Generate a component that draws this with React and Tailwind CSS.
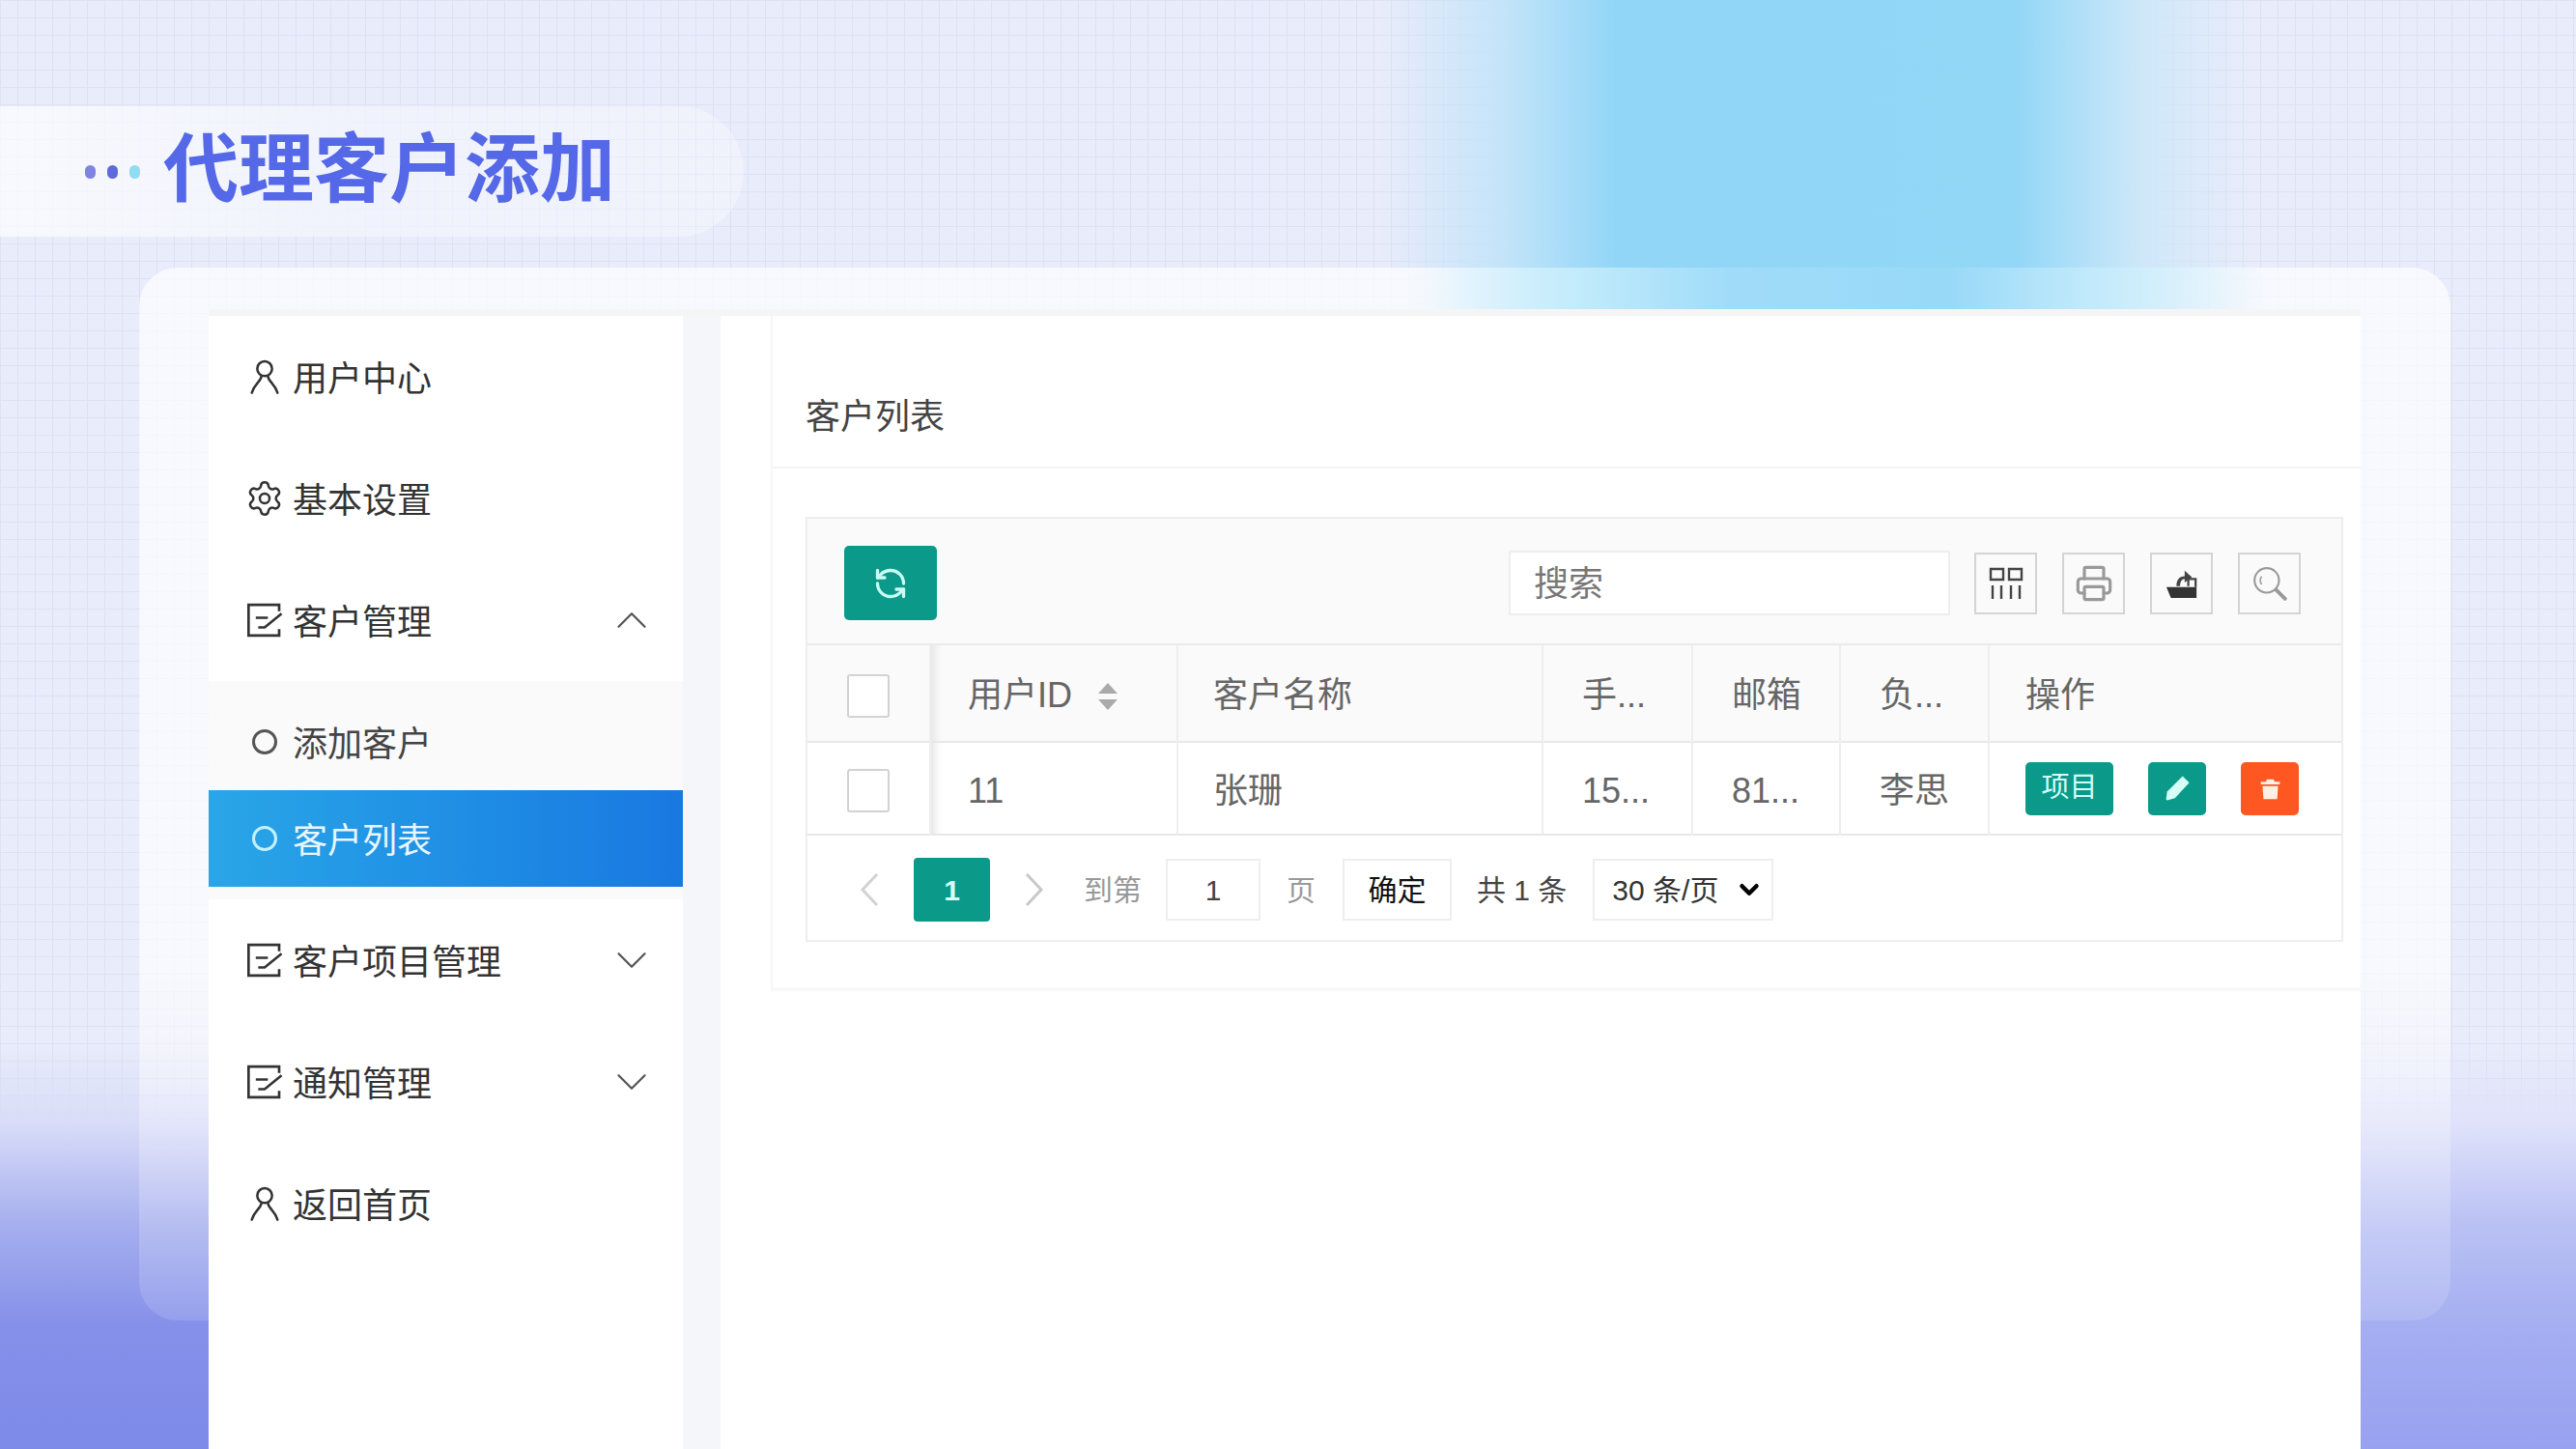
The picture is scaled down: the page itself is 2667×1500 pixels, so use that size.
import React from "react";
import { ChevronDown, ChevronUp, Printer, RefreshCcw, Settings } from "lucide-react";

function PersonIcon() {
  return (
    <svg viewBox="0 0 24 24" fill="none" stroke="#333" strokeWidth="1.5" strokeLinecap="round" className="h-[40px] w-[40px] shrink-0">
      <circle cx="12" cy="7" r="4.6" />
      <path d="M10 11.6c-.4 3.6-4.2 4.4-6 10.4M14 11.6c.4 3.6 4.2 4.4 6 10.4" />
    </svg>
  );
}

function EditIcon() {
  return (
    <svg viewBox="0 0 24 24" fill="none" stroke="#333" strokeWidth="1.6" className="h-[40px] w-[40px] shrink-0">
      <path d="M21 6.5V2.5H2v19h19v-4" />
      <path d="M6.5 10.5H14M8 16.5h4L22.5 8" />
    </svg>
  );
}

function SidebarRow({ icon, label, chevron }) {
  return (
    <div className="flex h-[126px] items-center pl-[38px] pr-[26px] text-[36px] text-[#333]">
      <span className="mr-[9px] flex w-[40px] shrink-0 items-center justify-center">{icon}</span>
      <span className="pt-[5px]">{label}</span>
      {chevron === "up" && <ChevronUp className="ml-auto h-[54px] w-[54px] text-[#555]" strokeWidth={1} />}
      {chevron === "down" && <ChevronDown className="ml-auto h-[54px] w-[54px] text-[#555]" strokeWidth={1} />}
    </div>
  );
}

function SubItem({ label, active }) {
  return (
    <div className={active
      ? "flex h-[100px] items-center bg-gradient-to-r from-[#2aa6e7] to-[#1a78e1] pl-[45px] text-[36px] text-[#e8f6ff]"
      : "flex h-[100px] items-center pl-[45px] text-[36px] text-[#444]"}>
      <span className={active
        ? "mr-[16px] h-[26px] w-[26px] rounded-full border-[3px] border-[#c5f0ff]"
        : "mr-[16px] h-[26px] w-[26px] rounded-full border-[3px] border-[#555]"} />
      <span className="pt-[5px]">{label}</span>
    </div>
  );
}

function Sidebar() {
  return (
    <aside className="h-full w-[491px] shrink-0 bg-white">
      <SidebarRow icon={<PersonIcon />} label="用户中心" />
      <SidebarRow icon={<Settings className="h-[40px] w-[40px]" strokeWidth={1.5} color="#333" />} label="基本设置" />
      <SidebarRow icon={<EditIcon />} label="客户管理" chevron="up" />
      <div className="bg-[#fafafa] py-[13px]">
        <SubItem label="添加客户" />
        <SubItem label="客户列表" active />
      </div>
      <SidebarRow icon={<EditIcon />} label="客户项目管理" chevron="down" />
      <SidebarRow icon={<EditIcon />} label="通知管理" chevron="down" />
      <SidebarRow icon={<PersonIcon />} label="返回首页" />
    </aside>
  );
}

function ToolButton({ children }) {
  return (
    <div className="flex h-[64px] w-[65px] items-center justify-center border-2 border-[#d4d4d4]">
      {children}
    </div>
  );
}

function Checkbox() {
  return <span className="block h-[45px] w-[44px] rounded-[3px] border-2 border-[#d2d2d2] bg-white" />;
}

function Toolbar() {
  return (
    <div className="flex h-[131px] items-center border-b-2 border-[#eaeaea] bg-[#fafafa] pl-[38px] pr-[42px] pt-[4px]">
      <button className="flex h-[77px] w-[96px] items-center justify-center rounded-[5px] bg-[#0b9a8a]">
        <RefreshCcw className="h-[36px] w-[36px] text-[#c9fbf3]" strokeWidth={2.2} />
      </button>
      <div className="ml-auto flex h-[67px] w-[457px] items-center border-2 border-[#eeeeee] bg-white pl-[24px] pt-[3px] text-[36px] text-[#777]">
        搜索
      </div>
      <div className="ml-[25px] flex gap-[26px]">
        <ToolButton>
          <svg viewBox="0 0 36 36" fill="none" stroke="#444" strokeWidth="2.4" className="h-[36px] w-[36px]">
            <path d="M2 3h13v11H2zM21 3h13v11H21zM4 20v14M13 20v14M23 20v14M32 20v14" />
          </svg>
        </ToolButton>
        <ToolButton>
          <Printer className="h-[40px] w-[40px] text-[#999]" strokeWidth={1.9} />
        </ToolButton>
        <ToolButton>
          <svg viewBox="0 0 36 36" className="h-[34px] w-[34px]">
            <path d="M1 22h33v12H6z" fill="#333" />
            <path d="M25 21v-8h8v9" fill="none" stroke="#444" strokeWidth="2.4" />
            <path d="M12 21c0-7 3-11 9-11V4l8 7-8 6v-4c-3 0-5 3-5 8z" fill="#444" />
          </svg>
        </ToolButton>
        <ToolButton>
          <svg viewBox="0 0 36 36" fill="none" stroke="#999" className="h-[38px] w-[38px]">
            <circle cx="15" cy="15" r="12" strokeWidth="2" />
            <path d="M24 24l9 9" strokeWidth="3.6" strokeLinecap="round" />
            <path d="M10 11a7 7 0 0 0 0 8" strokeWidth="1.4" />
          </svg>
        </ToolButton>
      </div>
    </div>
  );
}

function SortArrows() {
  return (
    <svg viewBox="0 0 24 32" className="ml-[25px] inline-block h-[32px] w-[24px] align-[-5px]">
      <path d="M12 2l10 11H2z" fill="#aaaaaa" />
      <path d="M12 30L2 19h20z" fill="#aaaaaa" />
    </svg>
  );
}

const headCell = "border-r-2 border-[#eeeeee] pl-[40px] pt-[5px] text-left font-normal";
const bodyCell = "border-r-2 border-[#eeeeee] pl-[40px] pt-[5px]";

function CustomerTable() {
  return (
    <table className="w-full table-fixed border-collapse text-[36px] text-[#666]">
      <colgroup>
        <col className="w-[127px]" />
        <col className="w-[256px]" />
        <col className="w-[378px]" />
        <col className="w-[155px]" />
        <col className="w-[153px]" />
        <col className="w-[154px]" />
        <col />
      </colgroup>
      <thead>
        <tr className="h-[100px] border-b-2 border-[#e8e8e8] bg-[#fafafa]">
          <th className="border-r-2 border-[#eeeeee] pl-[41px] pt-[5px]"><Checkbox /></th>
          <th className="border-r-2 border-[#eeeeee] pl-[38px] pt-[5px] text-left font-normal shadow-[inset_12px_0_8px_-8px_#e4e4e4]">用户ID<SortArrows /></th>
          <th className="border-r-2 border-[#eeeeee] pl-[36px] pt-[5px] text-left font-normal">客户名称</th>
          <th className={headCell}>手...</th>
          <th className={headCell}>邮箱</th>
          <th className={headCell}>负...</th>
          <th className="pl-[37px] pt-[5px] text-left font-normal">操作</th>
        </tr>
      </thead>
      <tbody>
        <tr className="h-[96px] border-b-2 border-[#e8e8e8] bg-white">
          <td className="border-r-2 border-[#eeeeee] pl-[41px] pt-[5px]"><Checkbox /></td>
          <td className="border-r-2 border-[#eeeeee] pl-[38px] pt-[5px] shadow-[inset_12px_0_8px_-8px_#e4e4e4]">11</td>
          <td className="border-r-2 border-[#eeeeee] pl-[36px] pt-[5px]">张珊</td>
          <td className={bodyCell}>15...</td>
          <td className={bodyCell}>81...</td>
          <td className={bodyCell}>李思</td>
          <td className="pl-[37px]">
            <div className="flex items-center">
              <span className="flex h-[55px] w-[91px] items-center justify-center rounded-[5px] bg-[#0b9a8a] text-[29px] text-[#d6fff8]">项目</span>
              <span className="ml-[36px] flex h-[55px] w-[60px] items-center justify-center rounded-[5px] bg-[#0b9a8a]">
                <svg viewBox="0 0 28 28" className="h-[32px] w-[32px]">
                  <path d="M19 3l6 6-13 14-7 2-1-1 1-7z" fill="#d6fff8" />
                </svg>
              </span>
              <span className="ml-[36px] flex h-[55px] w-[60px] items-center justify-center rounded-[5px] bg-[#ff5722]">
                <svg viewBox="0 0 28 28" className="h-[25px] w-[25px]">
                  <path d="M10 3h8l1 3h6v3H3V6h6zM5 11h18l-1 15H6z" fill="#fff0e6" />
                </svg>
              </span>
            </div>
          </td>
        </tr>
      </tbody>
    </table>
  );
}

function Pager() {
  return (
    <div className="flex h-[108px] items-center pt-[4px] text-[30px] text-[#999]">
      <svg viewBox="0 0 24 36" fill="none" stroke="#d2d2d2" strokeWidth="3" className="ml-[52px] h-[36px] w-[24px]">
        <path d="M20 2L5 18l15 16" />
      </svg>
      <span className="ml-[34px] flex h-[66px] w-[79px] items-center justify-center rounded-[4px] bg-[#0b9a8a] font-bold text-[#d6fff8]">1</span>
      <svg viewBox="0 0 24 36" fill="none" stroke="#c8c8c8" strokeWidth="3" className="ml-[34px] h-[36px] w-[24px]">
        <path d="M4 2l15 16L4 34" />
      </svg>
      <span className="ml-[39px]">到第</span>
      <span className="ml-[25px] flex h-[64px] w-[98px] items-center justify-center border-2 border-[#eeeeee] text-[#444]">1</span>
      <span className="ml-[27px]">页</span>
      <span className="ml-[28px] flex h-[64px] w-[113px] items-center justify-center border-2 border-[#eeeeee] text-[#111]">确定</span>
      <span className="ml-[26px] text-[#444]">共 1 条</span>
      <span className="ml-[27px] flex h-[64px] w-[187px] items-center border-2 border-[#eeeeee] pl-[18px] text-[#333]">
        30 条/页
        <ChevronDown className="ml-auto mr-[8px] h-[30px] w-[30px] text-black" strokeWidth={3.6} />
      </span>
    </div>
  );
}

function MainPanel() {
  return (
    <main className="ml-[39px] h-full flex-1 bg-white pl-[52px]">
      <div className="border-l-2 border-[#f6f6f6]">
        <div className="flex h-[158px] items-center border-b-2 border-[#f4f4f4] pl-[34px] pt-[54px] text-[36px] text-[#444]">客户列表</div>
        <div className="border-b-[4px] border-[#f8f8f8] pb-[47px] pl-[34px] pr-[18px] pt-[50px]">
          <div className="border-2 border-[#eeeeee]">
            <Toolbar />
            <CustomerTable />
            <Pager />
          </div>
        </div>
      </div>
    </main>
  );
}

export default function App() {
  return (
    <div className="relative h-[1500px] w-[2667px] overflow-hidden bg-[#e9ecfa] font-['Liberation_Sans','Noto_Sans_CJK_SC',sans-serif]">
      {/* page backdrop: grid, blue glow, purple corners */}
      <div className="pointer-events-none absolute inset-0 bg-[linear-gradient(#dde1f4_1px,transparent_1px),linear-gradient(90deg,#dde1f4_1px,transparent_1px)] bg-[size:18px_18px]" />
      <div className="pointer-events-none absolute left-[1430px] top-0 h-[500px] w-[900px] bg-[linear-gradient(90deg,transparent_0%,#c4e4f9_14%,#92d6f7_27%,#92d7f6_73%,#cde7f9_87%,transparent_100%)]" />
      <div className="pointer-events-none absolute bottom-0 left-0 h-[420px] w-[1300px] bg-[linear-gradient(0deg,#7e8ae8_0%,#8490e9_30%,#a5aeee_55%,#d8dcf8_80%,transparent_100%)]" />
      <div className="pointer-events-none absolute bottom-0 right-0 h-[420px] w-[1300px] bg-[linear-gradient(0deg,#97a1f0_0%,#a5aef1_30%,#b9c1f4_55%,#dfe2fa_80%,transparent_100%)]" />

      <div className="relative">
        <header className="mt-[110px] flex h-[135px] w-[770px] items-center rounded-r-[68px] bg-gradient-to-r from-white/70 via-[#f2f4fd]/80 to-white/30 pl-[88px]">
          <span className="h-[14px] w-[11px] rounded-full bg-[#7f84e2]" />
          <span className="ml-[12px] h-[14px] w-[11px] rounded-full bg-[#5f6ad9]" />
          <span className="ml-[12px] h-[14px] w-[11px] rounded-full bg-[#90dcf3]" />
          <h1 className="ml-[24px] pb-[3px] text-[78px] font-bold leading-none text-[#5468e8]">代理客户添加</h1>
        </header>

        <section className="relative ml-[144px] mt-[32px] h-[1090px] w-[2393px] rounded-[40px] bg-[linear-gradient(180deg,rgba(255,255,255,.7)_0%,rgba(255,255,255,.7)_66%,rgba(255,255,255,.25)_82%,rgba(255,255,255,.12)_100%)]">
          <div className="pointer-events-none absolute left-[1330px] top-0 h-[60px] w-[876px] bg-[linear-gradient(90deg,transparent_0%,#c2ebfb_18%,#a0dcf9_36%,#98d9f8_62%,#c0e9fb_78%,transparent_100%)]" />
          <div className="relative ml-[72px] flex h-[1180px] w-[2228px] translate-y-[43px] border-t-[7px] border-[#f5f5f5] bg-[#f5f6fa]">
            <Sidebar />
            <MainPanel />
          </div>
        </section>
      </div>
    </div>
  );
}
